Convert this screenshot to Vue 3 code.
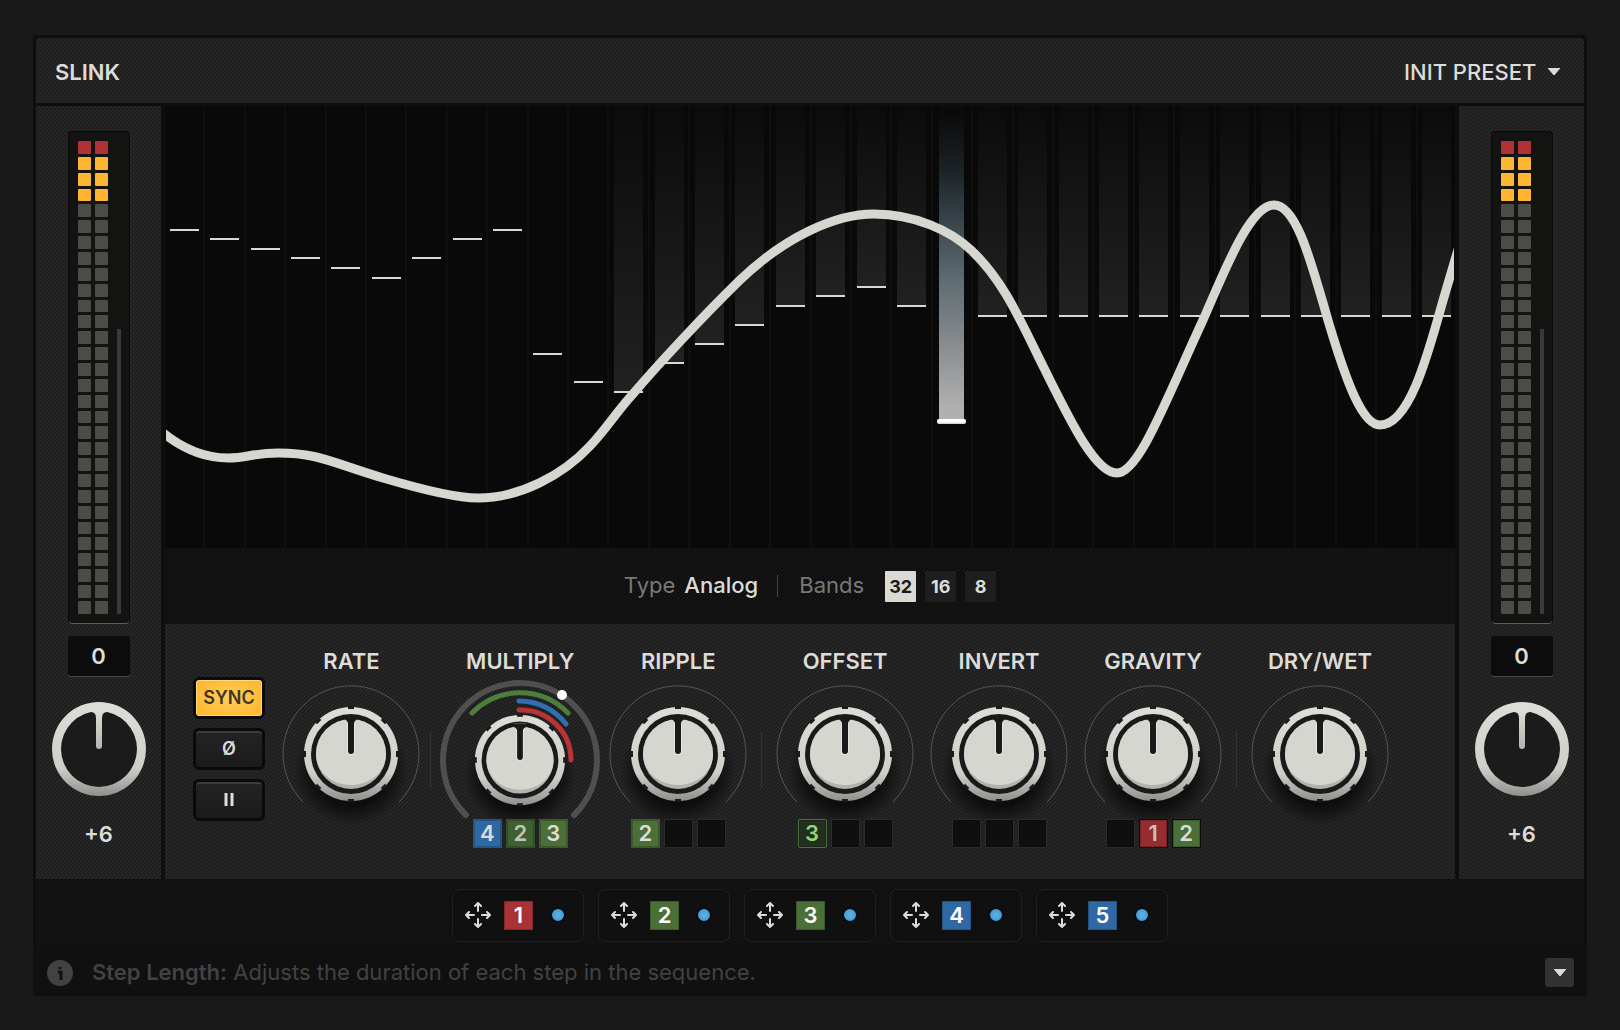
<script setup>
import { ref } from 'vue'

// Distance from the top of the display to the foot of each step marker, in pixels.
const stepDepths = [
  125, 134, 144, 153, 163, 173, 153, 134, 125, 249, 277, 287, 258, 239, 220, 201,
  191, 182, 201, 318, 211, 211, 211, 211, 211, 211, 211, 211, 211, 211, 211, 211,
]
const firstFilled = 11
const playhead = 19
const steps = stepDepths.map((depth, i) => ({
  depth,
  filled: i >= firstFilled && i !== playhead,
  current: i === playhead,
}))

const wave =
  'M155 426 C178 447 203 458 228 458 C248 458 252 453 278 453 C318 453 330 462 383 478 ' +
  'C420 489 455 498 478 498 C520 498 563 475 590 446 C606 429 615 414 632 395 ' +
  'C655 368 700 319 740 280 C785 237 835 214 874 214 C915 214 951 231 971 250 ' +
  'C1004 281 1020 320 1044 368 C1070 420 1095 473 1117 473 C1139 473 1166 400 1203 320 ' +
  'C1225 270 1250 205 1274 205 C1298 205 1313 270 1330 327 C1346 380 1362 425 1380 425 ' +
  'C1408 425 1426 362 1442 304 L1462 236'

const bands = ref('32')
const notches = [0, 45, 90, 135, 180, 225, 270, 315]

const empty = { label: '', tone: 'empty' }
const groups = [
  [{ name: 'RATE' }],
  [
    {
      name: 'MULTIPLY',
      active: true,
      slots: [
        { label: '4', tone: 'blue' },
        { label: '2', tone: 'green dim' },
        { label: '3', tone: 'green' },
      ],
    },
    { name: 'RIPPLE', slots: [{ label: '2', tone: 'green' }, empty, empty] },
  ],
  [
    { name: 'OFFSET', slots: [{ label: '3', tone: 'ghost' }, empty, empty] },
    { name: 'INVERT', slots: [empty, empty, empty] },
    {
      name: 'GRAVITY',
      slots: [empty, { label: '1', tone: 'red dim edged' }, { label: '2', tone: 'green edged' }],
    },
  ],
  [{ name: 'DRY/WET' }],
]

const sources = [
  { label: '1', tone: 'red' },
  { label: '2', tone: 'green' },
  { label: '3', tone: 'green' },
  { label: '4', tone: 'blue' },
  { label: '5', tone: 'blue' },
]

const segmentTone = (n) => (n === 1 ? 'hot' : n < 5 ? 'warm' : '')
</script>

<template>
  <main class="plugin">
    <svg class="defs" aria-hidden="true">
      <defs>
        <linearGradient id="rim" x1="0" y1="0" x2="0" y2="1">
          <stop offset="0" stop-color="#deded9" />
          <stop offset="0.7" stop-color="#cfcfca" />
          <stop offset="1" stop-color="#8f8f8d" />
        </linearGradient>
        <linearGradient id="needle" x1="0" y1="0" x2="0" y2="1">
          <stop offset="0" stop-color="#deded9" />
          <stop offset="1" stop-color="#b4b4b0" />
        </linearGradient>
        <radialGradient id="shade">
          <stop offset="0" stop-color="#000" stop-opacity="0.9" />
          <stop offset="0.65" stop-color="#000" stop-opacity="0.6" />
          <stop offset="1" stop-color="#000" stop-opacity="0" />
        </radialGradient>
        <g id="cap">
          <ellipse cx="0" cy="17" rx="58" ry="54" fill="url(#shade)" />
          <circle r="47" fill="url(#rim)" />
          <path
            v-for="a in notches"
            :key="a"
            d="M-3 -48 H3 V-45 H-3 Z"
            fill="#1b1b1b"
            :transform="`rotate(${a})`"
          />
          <circle r="40" fill="#1a1a1a" />
          <circle r="35" fill="#b2b2ae" />
          <path d="M-35 0 A35 35 0 0 1 35 0 C35 18 19 31 0 31 C-19 31 -35 18 -35 0 Z" fill="#d6d6d1" />
          <path
            d="M-7 -38 V-35 Q-4 -34 -4 -30 V-3 A4 4 0 0 0 4 -3 V-30 Q4 -34 7 -35 V-38 Z"
            fill="#e6e6e2"
          />
          <path
            d="M-8 -38 V-35 Q-3 -34 -3 -30 V-3 A3 3 0 0 0 3 -3 V-30 Q3 -34 8 -35 V-38 Z"
            fill="#1a1a1a"
          />
        </g>
        <g id="gain">
          <circle r="47" fill="url(#rim)" />
          <circle r="38" fill="#1b1b1b" />
          <path
            d="M-10 -39 L-8 -37 Q-3 -37 -3 -31 V-3 A3 3 0 0 0 3 -3 V-31 Q3 -37 8 -37 L10 -39 Z"
            fill="url(#needle)"
          />
        </g>
      </defs>
    </svg>

    <header class="titlebar hatch">
      <h1>SLINK</h1>
      <label class="preset">
        <select aria-label="Preset"><option>INIT PRESET</option></select>
        <svg width="14" height="8" viewBox="0 0 14 8"><path d="M1 0 H13 L7 7 Z" fill="#dcdcd8" stroke="#dcdcd8" stroke-linejoin="round" /></svg>
      </label>
    </header>

    <div class="body">
      <aside v-for="side in ['Input', 'Output']" :key="side" class="channel hatch" :class="side.toLowerCase()">
        <div class="meter">
          <div v-for="c in 2" :key="c" class="leds">
            <i v-for="n in 30" :key="n" :class="segmentTone(n)"></i>
          </div>
          <div class="track"></div>
        </div>
        <input class="readout" type="text" value="0" :aria-label="side + ' level'" />
        <label class="gain">
          <svg width="94" height="94" viewBox="-47 -47 94 94"><use href="#gain" /></svg>
          <input type="range" :aria-label="side + ' gain'" />
        </label>
        <output>+6</output>
      </aside>

      <section class="center">
        <div class="display">
          <div v-for="(s, i) in steps" :key="i" class="step">
            <div class="bar" :class="{ filled: s.filled, current: s.current }" :style="{ height: s.depth + 'px' }"></div>
          </div>
          <div class="wave">
            <svg viewBox="166 106 1288 442" preserveAspectRatio="none">
              <path :d="wave" fill="none" stroke="#d6d7d1" stroke-width="9" />
            </svg>
          </div>
        </div>

        <div class="options hatch-dark">
          <label class="type">
            <span>Type</span>
            <select><option>Analog</option></select>
          </label>
          <i class="rule"></i>
          <span class="caption">Bands</span>
          <div class="bands" role="radiogroup" aria-label="Bands">
            <label v-for="b in ['32', '16', '8']" :key="b" :class="{ on: bands === b }">
              <input v-model="bands" type="radio" name="bands" :value="b" />{{ b }}
            </label>
          </div>
        </div>

        <div class="controls hatch">
          <div class="modes">
            <button class="lit" type="button">SYNC</button>
            <button type="button">Ø</button>
            <button type="button" aria-label="Pause">
              <svg width="10" height="13" viewBox="0 0 10 13"><path d="M2 0 V13 M8 0 V13" stroke="#dcdcd8" stroke-width="3" /></svg>
            </button>
          </div>
          <template v-for="(group, g) in groups" :key="g">
            <i v-if="g" class="divider" :class="{ wide: g > 1 }"></i>
            <div class="group" :class="{ roomy: g === 2 }">
              <div v-for="k in group" :key="k.name" class="knob">
                <label>
                  <span>{{ k.name }}</span>
                  <svg v-if="k.active" width="160" height="145" viewBox="-80 -86 160 145">
                    <path d="M-54 55 A77 77 0 1 1 54 55" fill="none" stroke="#4f4f4f" stroke-width="6" stroke-linecap="round" />
                    <use href="#cap" transform="scale(0.96)" />
                    <g fill="none" stroke-width="5" stroke-linecap="round">
                      <path d="M-48 -47 A67 67 0 0 1 48 -47" stroke="#4c7f3c" />
                      <path d="M-1 -59 A59 59 0 0 1 46 -36" stroke="#2f70b5" />
                      <path d="M-1 -50 A50 50 0 0 1 51 0" stroke="#ba3336" />
                    </g>
                    <circle cx="42" cy="-65" r="5" fill="#fff" />
                  </svg>
                  <svg v-else width="138" height="145" viewBox="-69 -80 138 145">
                    <path d="M-48 48 A68 68 0 1 1 48 48" fill="none" stroke="#555" />
                    <use href="#cap" />
                  </svg>
                  <input type="range" />
                </label>
                <div v-if="k.slots" class="slots">
                  <button v-for="(s, i) in k.slots" :key="i" type="button" class="tile" :class="s.tone" :aria-label="k.name + ' slot'">{{ s.label }}</button>
                </div>
              </div>
            </div>
          </template>
        </div>
      </section>
    </div>

    <nav class="sources hatch-dark">
      <div v-for="s in sources" :key="s.label" class="source">
        <svg width="26" height="26" viewBox="0 0 26 26" fill="none" stroke="#dcdcd8" stroke-width="2" stroke-linecap="round" stroke-linejoin="round">
          <path d="M13 9 V1 M10 4 L13 1 L16 4 M13 17 V25 M10 22 L13 25 L16 22 M9 13 H1 M4 10 L1 13 L4 16 M17 13 H25 M22 10 L25 13 L22 16" />
        </svg>
        <span class="tile flat" :class="s.tone">{{ s.label }}</span>
        <input type="checkbox" checked :aria-label="'Source ' + s.label" />
      </div>
    </nav>

    <footer>
      <svg width="26" height="26" viewBox="0 0 26 26">
        <circle cx="13" cy="13" r="13" fill="#424242" />
        <path d="M11 12 H14 V20 M13 7 V9" fill="none" stroke="#101010" stroke-width="3" />
      </svg>
      <p><b>Step Length:</b> Adjusts the duration of each step in the sequence.</p>
      <button type="button" aria-label="Collapse">
        <svg width="14" height="8" viewBox="0 0 14 8"><path d="M1 0 H13 L7 7 Z" fill="#dcdcd3" stroke="#dcdcd3" stroke-linejoin="round" /></svg>
      </button>
    </footer>
  </main>
</template>

<style>
body {
  background: #191919;
}
</style>

<style scoped>
* {
  box-sizing: border-box;
}
.plugin {
  margin: 35px 33px 34px;
  padding: 3px 3px 0;
  background: #0e0e0e;
  border-radius: 3px;
  color: #dcdcd8;
  font: 500 22px/26px Inter, "Liberation Sans", sans-serif;
}
.defs {
  position: absolute;
  width: 0;
  height: 0;
}
button,
input,
select {
  margin: 0;
  padding: 0;
  border: 0;
  color: inherit;
  font: inherit;
  appearance: none;
}
select {
  background: none;
}
.hatch {
  background: linear-gradient(135deg, #2b2b2b 12%, #1d1d1d 13% 49%, #2b2b2b 50% 62%, #1d1d1d 63%) 0 0 / 4px 4px;
}
.hatch-dark {
  background: linear-gradient(135deg, #191919 12%, #0d0d0d 13% 49%, #191919 50% 62%, #0d0d0d 63%) 0 0 / 4px 4px;
}

.titlebar {
  display: flex;
  align-items: center;
  justify-content: space-between;
  height: 65px;
  padding: 2px 23px 0 19px;
  margin-bottom: 3px;
  border-radius: 4px 4px 0 0;
}
h1 {
  margin: 0;
  font-size: 22px;
  font-weight: 600;
}
.preset {
  display: flex;
  align-items: center;
  gap: 10px;
}

.body {
  display: flex;
  gap: 4px;
}
.output {
  order: 2;
}
.center {
  flex: 1;
  min-width: 0;
}

.channel {
  display: flex;
  flex-direction: column;
  align-items: center;
  width: 125px;
  padding-top: 26px;
  font-weight: 600;
}
.meter {
  display: flex;
  gap: 4px;
  width: 60px;
  height: 491px;
  padding: 9px 7px 9px 9px;
  background: #131311;
  border-radius: 3px;
  box-shadow: 0 1px #5c5c5c, 0 0 0 1px #0a0a0a;
}
.leds {
  display: flex;
  flex-direction: column;
  gap: 3px;
  width: 13px;
}
.leds i {
  flex: 1;
  background: #4b4b47;
  border-radius: 1px;
}
.leds .hot {
  background: #b13236;
}
.leds .warm {
  background: #ffb52f;
}
.track {
  align-self: flex-end;
  width: 4px;
  height: 285px;
  margin-left: 5px;
  background: #3a3a3a;
}
.readout {
  width: 62px;
  height: 40px;
  margin-top: 13px;
  background: #0c0c0c;
  border-radius: 3px;
  box-shadow: 0 1px #4a4a4a;
  text-align: center;
}
.gain {
  position: relative;
  height: 94px;
  margin: 26px 0 25px;
}
.gain svg,
.knob svg {
  display: block;
  overflow: visible;
}
.gain input,
.knob input {
  position: absolute;
  inset: 0;
  width: 100%;
  height: 100%;
  opacity: 0;
}

.display {
  position: relative;
  display: flex;
  height: 442px;
  background: #090909;
  overflow: hidden;
}
.step {
  flex: 1;
  display: flex;
  flex-direction: column;
  align-items: center;
  border-right: 2px solid #0f0f0f;
}
.step:nth-child(32) {
  margin-right: -3px;
}
.bar {
  width: 29px;
  border-bottom: 2px solid #d8d8d4;
}
.filled {
  background: linear-gradient(#0b0b0b, #141414 40%, #212121);
}
.current {
  position: relative;
  width: 25px;
  border: 0;
  background: linear-gradient(#0b0b0b 3%, #1c2226 20%, #37444a 36%, #5d6a6f 54%, #82878b 72%, #b0b0b0 95%);
}
.current::after {
  content: "";
  position: absolute;
  bottom: 0;
  left: -2px;
  width: 29px;
  height: 5px;
  background: linear-gradient(#fff 60%, #c8c8c8);
  border-radius: 2px;
}
.wave {
  position: absolute;
  inset: 0 1px;
}
.wave svg {
  display: block;
  width: 100%;
  height: 100%;
}

.options {
  display: flex;
  align-items: center;
  justify-content: center;
  height: 76px;
  font-weight: 400;
}
.type {
  display: flex;
  gap: 9px;
}
.type,
.caption {
  margin-bottom: 2px;
}
.type span,
.caption {
  color: #787878;
}
.type select {
  font-weight: 500;
}
.rule {
  width: 1px;
  height: 22px;
  margin: 0 21px 0 19px;
  background: #444;
}
.bands {
  display: flex;
  gap: 9px;
  margin-left: 21px;
}
.bands label {
  width: 31px;
  height: 31px;
  background: #1e1e1e;
  border-radius: 1px;
  font-size: 18px;
  font-weight: 700;
  line-height: 32px;
  text-align: center;
}
.bands .on {
  background: #d9dad4;
  color: #1a1a1a;
}
.bands input {
  position: absolute;
  opacity: 0;
}

.controls {
  display: flex;
  align-items: flex-start;
  justify-content: space-between;
  height: 255px;
  padding: 24px 66px 0 28px;
}
.modes {
  display: flex;
  flex-direction: column;
  gap: 9px;
  margin: 29px 17px 0 0;
}
.modes button {
  width: 72px;
  height: 42px;
  background: linear-gradient(#232323, #1b1b1b);
  border: 3px solid #0a0a0a;
  border-radius: 6px;
  box-shadow: inset 0 2px #3c3c3c;
  font-size: 18px;
  font-weight: 600;
}
.modes .lit {
  background: radial-gradient(#ffcf58, #fdb32d);
  box-shadow: inset 0 0 0 1px #ffdb78;
  color: #40361f;
}
.divider {
  width: 1px;
  height: 57px;
  margin: 83px 9px 0;
  background: #333;
}
.divider.wide {
  margin: 83px 14px 0 13px;
}
.group {
  display: flex;
  gap: 9px;
}
.group.roomy {
  gap: 16px;
}
.knob {
  font-weight: 600;
  text-align: center;
}
.knob label {
  position: relative;
  display: block;
}
.knob span {
  display: block;
}
.slots {
  position: relative;
  display: flex;
  justify-content: center;
  gap: 4px;
}
.tile {
  width: 29px;
  height: 29px;
  border: 1px solid #0003;
  box-shadow: inset 0 0 0 1px #0003;
  font-size: 22px;
  font-weight: 600;
  line-height: 27px;
  text-align: center;
}
.tile.flat {
  box-shadow: none;
  color: #fff;
}
.red {
  background: #a83236;
}
.green {
  background: #4a7038;
}
.blue {
  background: #2e69a6;
}
.dim {
  color: #c3c3bd;
}
.green.dim {
  background: #3f6131;
}
.red.dim {
  background: #942c30;
}
.edged {
  border: 1px solid #0c0c0c;
}
.ghost {
  background: #24301f;
  border: 1px solid #48703a;
  border-radius: 2px;
  color: #93d873;
}
.empty {
  background: #0f0f0f;
  border-color: #2c2c2c;
  border-radius: 2px;
}

.sources {
  display: flex;
  justify-content: center;
  align-items: center;
  gap: 14px;
  height: 70px;
  padding-top: 2px;
}
.source {
  display: flex;
  align-items: center;
  width: 132px;
  height: 53px;
  padding-left: 12px;
  background: #101010;
  border: 1px solid #202020;
  border-radius: 8px;
}
.source .tile {
  margin: 0 17px 0 13px;
}
.source input {
  width: 16px;
  height: 16px;
  background: radial-gradient(#5cb4e8, #3f8fc8);
  border: 2px solid #070d14;
  border-radius: 50%;
}

footer {
  display: flex;
  align-items: center;
  height: 47px;
  margin: 0 -3px;
  padding: 0 13px 0 14px;
  background: #101010;
  color: #424242;
  font-weight: 400;
}
footer p {
  flex: 1;
  margin: 0 0 2px 19px;
}
footer b {
  font-weight: 600;
}
footer button {
  display: flex;
  align-items: center;
  justify-content: center;
  width: 29px;
  height: 29px;
  background: #323232;
  border-radius: 3px;
}
</style>
